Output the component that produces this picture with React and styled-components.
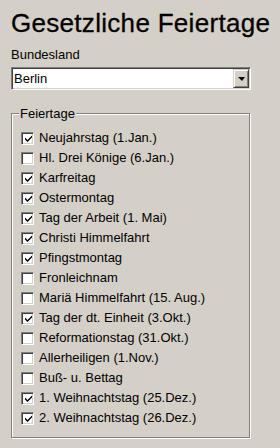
import { useState } from "react";
import styled, { createGlobalStyle } from "styled-components";

const COLORS = {
  face: "#d4d0c8",
  shadow: "#808080",
  dark: "#404040",
  light: "#ffffff",
};

const HOLIDAYS = [
  { id: 1, name: "Neujahrstag (1.Jan.)", checked: true },
  { id: 2, name: "Hl. Drei Könige (6.Jan.)", checked: false },
  { id: 3, name: "Karfreitag", checked: true },
  { id: 4, name: "Ostermontag", checked: true },
  { id: 5, name: "Tag der Arbeit (1. Mai)", checked: true },
  { id: 6, name: "Christi Himmelfahrt", checked: true },
  { id: 7, name: "Pfingstmontag", checked: true },
  { id: 8, name: "Fronleichnam", checked: false },
  { id: 9, name: "Mariä Himmelfahrt (15. Aug.)", checked: false },
  { id: 10, name: "Tag der dt. Einheit (3.Okt.)", checked: true },
  { id: 11, name: "Reformationstag (31.Okt.)", checked: false },
  { id: 12, name: "Allerheiligen (1.Nov.)", checked: false },
  { id: 13, name: "Buß- u. Bettag", checked: false },
  { id: 14, name: "1. Weihnachtstag (25.Dez.)", checked: true },
  { id: 15, name: "2. Weihnachtstag (26.Dez.)", checked: true },
];

const GlobalStyle = createGlobalStyle`
  html, body {
    margin: 0;
    padding: 0;
    background: ${COLORS.face};
  }
  body {
    font-family: "Liberation Sans", Arial, sans-serif;
    color: #000;
  }
`;

const App = () => {
  const [holidays, setHolidays] = useState(HOLIDAYS);

  const toggle = (id) => {
    setHolidays(
      holidays.map((h) => (h.id === id ? { ...h, checked: !h.checked } : h))
    );
  };

  return (
    <>
      <GlobalStyle />
      <Page>
        <Title>Gesetzliche Feiertage</Title>
        <Label>Bundesland</Label>
        <Combo>
          <ComboText>Berlin</ComboText>
          <DropButton>
            <Arrow />
          </DropButton>
        </Combo>

        <Group>
          <Legend>Feiertage</Legend>
          <List>
            {holidays.map((h) => (
              <Row key={h.id} onClick={() => toggle(h.id)}>
                <Box>
                  {h.checked && (
                    <svg width="9" height="9" viewBox="0 0 9 9">
                      <path
                        d="M1 3.5 L3.5 6 L8 1.5 L8 3.5 L3.5 8 L1 5.5 Z"
                        fill="#000"
                      />
                    </svg>
                  )}
                </Box>
                <RowText>{h.name}</RowText>
              </Row>
            ))}
          </List>
        </Group>
      </Page>
    </>
  );
};

const Page = styled.div`
  display: flex;
  flex-direction: column;
  align-items: flex-start;
  width: 280px;
  height: 448px;
  box-sizing: border-box;
  padding: 9px 0 0 11px;
`;

const Title = styled.div`
  font-size: 26px;
  line-height: 29px;
  letter-spacing: 0.3px;
  -webkit-text-stroke: 0.3px #000;
  white-space: nowrap;
`;

const Label = styled.div`
  margin-top: 9px;
  font-size: 13px;
  line-height: 15px;
`;

const Combo = styled.div`
  margin-top: 5px;
  display: flex;
  align-items: stretch;
  width: 240px;
  height: 23px;
  box-sizing: border-box;
  background: #fff;
  border: 1px solid;
  border-color: ${COLORS.shadow} ${COLORS.light} ${COLORS.light} ${COLORS.shadow};
  box-shadow: inset 1px 1px 0 ${COLORS.dark}, inset -1px -1px 0 ${COLORS.face};
  padding: 1px;
`;

const ComboText = styled.div`
  flex: 1;
  font-size: 13px;
  line-height: 19px;
  padding-left: 1px;
`;

const DropButton = styled.div`
  width: 16px;
  box-sizing: border-box;
  display: flex;
  align-items: center;
  justify-content: center;
  background: ${COLORS.face};
  border: 1px solid;
  border-color: ${COLORS.face} ${COLORS.dark} ${COLORS.dark} ${COLORS.face};
  box-shadow: inset 1px 1px 0 ${COLORS.light}, inset -1px -1px 0 ${COLORS.shadow};
`;

const Arrow = styled.div`
  width: 0;
  height: 0;
  border-left: 4px solid transparent;
  border-right: 3px solid transparent;
  border-top: 4px solid #000;
  margin-top: 1px;
`;

const Group = styled.fieldset`
  margin: 16px 0 0 0;
  width: 239px;
  height: 332px;
  box-sizing: border-box;
  padding: 7px 0 0 7px;
  border: 1px solid ${COLORS.shadow};
  box-shadow: inset 1px 1px 0 ${COLORS.light}, 1px 1px 0 ${COLORS.light};
`;

const Legend = styled.legend`
  padding: 0 1px;
  font-size: 13px;
  line-height: 15px;
  background: ${COLORS.face};
`;

const List = styled.div`
  display: flex;
  flex-direction: column;
  padding-left: 2px;
`;

const Row = styled.div`
  display: flex;
  align-items: center;
  height: 20px;
  gap: 5px;
  cursor: default;
`;

const Box = styled.div`
  width: 13px;
  height: 13px;
  box-sizing: border-box;
  background: #fff;
  border: 1px solid;
  border-color: ${COLORS.shadow} ${COLORS.light} ${COLORS.light} ${COLORS.shadow};
  box-shadow: inset 1px 1px 0 ${COLORS.dark}, inset -1px -1px 0 ${COLORS.face};
  display: flex;
  align-items: center;
  justify-content: center;
  padding: 1px 0 0 1px;
`;

const RowText = styled.span`
  font-size: 13px;
  line-height: 20px;
  white-space: nowrap;
`;

export default App;
